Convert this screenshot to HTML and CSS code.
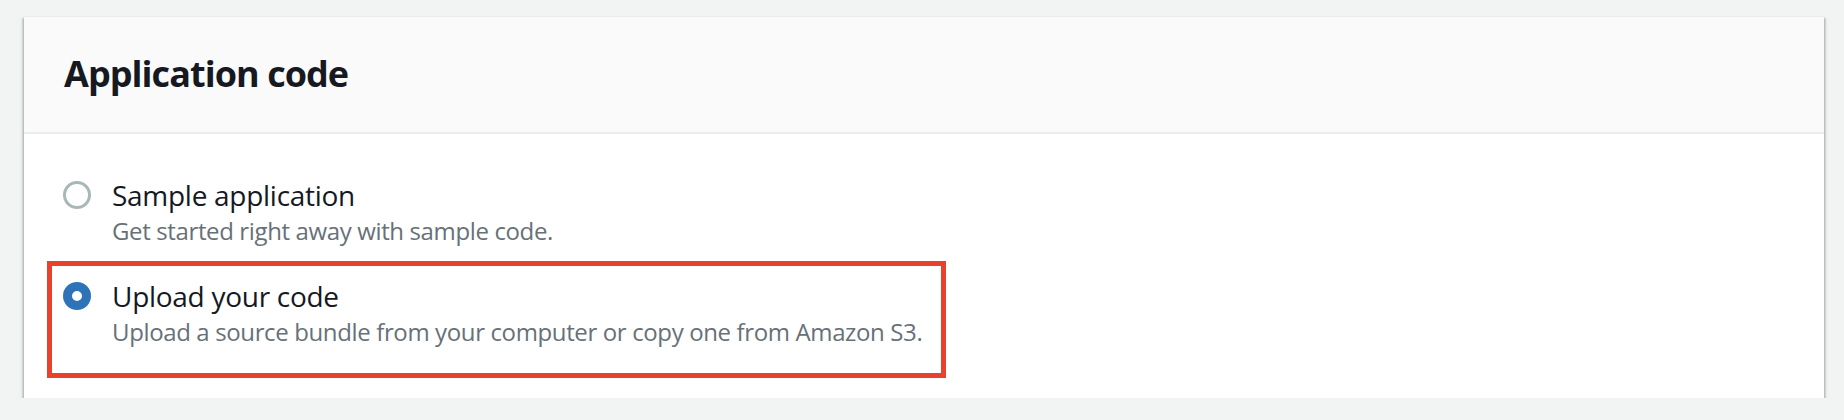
FILE: index.html
```html
<!DOCTYPE html>
<html lang="en">
<head>
<meta charset="utf-8">
<title>Application code</title>
<link rel="stylesheet" href="styles.css">
</head>
<body>
<section class="card">
  <header class="card-header">
    <h2 class="card-title">Application code</h2>
  </header>
  <div class="card-body">
    <label class="option">
      <span class="radio"></span>
      <span class="option-text">
        <span class="option-label">Sample application</span>
        <span class="option-desc">Get started right away with sample code.</span>
      </span>
    </label>
    <label class="option option-highlight">
      <span class="radio radio-checked"></span>
      <span class="option-text">
        <span class="option-label">Upload your code</span>
        <span class="option-desc">Upload a source bundle from your computer or copy one from Amazon S3.</span>
      </span>
    </label>
  </div>
</section>
</body>
</html>
```

FILE: styles.css
```css
* { box-sizing: border-box; }
html, body { margin: 0; padding: 0; }
body {
  background: #f2f3f3;
  font-family: "Open Sans", "Noto Sans", sans-serif;
  color: #16191f;
  padding: 16px 20px 0 24px;
}
.card {
  background: #ffffff;
  width: 1800px;
  height: 382px;
  box-shadow: 0 2px 2px rgba(0, 28, 36, 0.35), 2px 2px 2px rgba(0, 28, 36, 0.15), -2px 2px 2px rgba(0, 28, 36, 0.15);
  border-top: 1px solid #eaeded;
}
.card-header {
  background: #fafafa;
  height: 117px;
  border-bottom: 2px solid #eaeded;
  padding: 35px 40px 0 40px;
}
.card-title {
  margin: 0;
  font-size: 36px;
  line-height: 44px;
  font-weight: 700;
  color: #16191f;
  letter-spacing: -0.95px;
}
.card-body {
  padding: 41px 40px 20px 39px;
  display: flex;
  flex-direction: column;
  align-items: flex-start;
  gap: 14px;
}
.option {
  display: flex;
  align-items: flex-start;
  gap: 21px;
}
.option-highlight {
  border: 5px solid #e9412b;
  margin-left: -16px;
  padding: 10px 19px 25px 11px;
}
.radio {
  flex: none;
  width: 28px;
  height: 28px;
  border-radius: 50%;
  border: 3px solid #aab7b8;
  background: #ffffff;
  margin-top: 6px;
}
.radio-checked {
  border: 9px solid #2e73b8;
}
.option-text {
  display: flex;
  flex-direction: column;
}
.option-label {
  font-size: 28px;
  line-height: 40px;
  color: #16191f;
  letter-spacing: -0.28px;
}
.option-desc {
  font-size: 24px;
  line-height: 32px;
  color: #687078;
  letter-spacing: -0.37px;
}
```
